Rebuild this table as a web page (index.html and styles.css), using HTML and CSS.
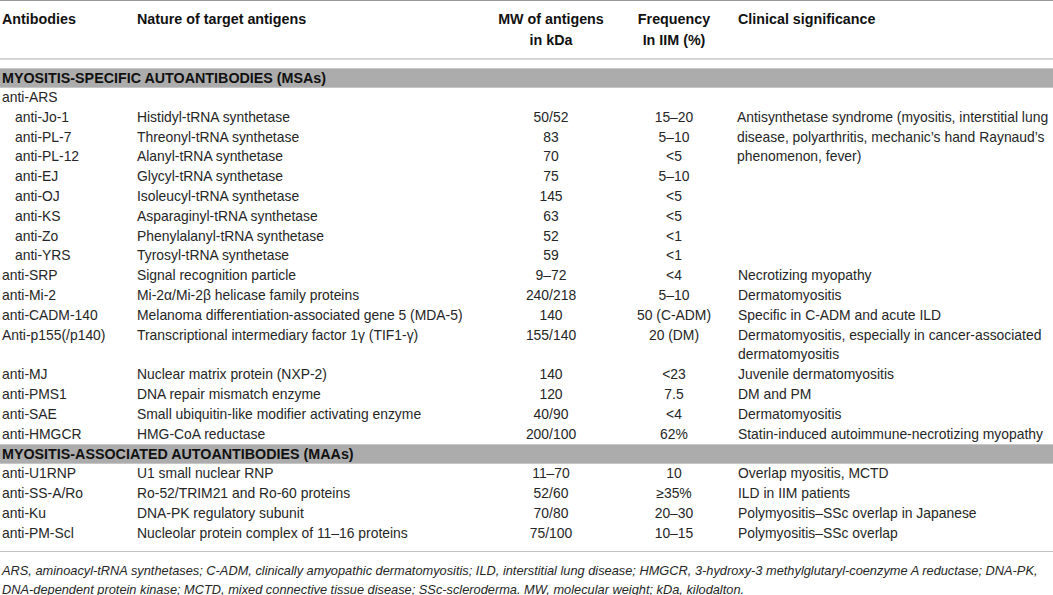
FILE: index.html
```html
<!DOCTYPE html>
<html>

<head>
    <meta charset="UTF-8">
    <title>Myositis autoantibodies</title>
    <link rel="stylesheet" href="styles.css">
</head>

<body>
    <table class="abtable">
        <colgroup>
            <col class="c-ab">
            <col class="c-nature">
            <col class="c-mw">
            <col class="c-freq">
            <col class="c-clin">
        </colgroup>
        <thead>
            <tr>
                <th>Antibodies</th>
                <th>Nature of target antigens</th>
                <th class="mid">MW of antigens<br>in kDa</th>
                <th class="mid">Frequency<br>In IIM (%)</th>
                <th>Clinical significance</th>
            </tr>
        </thead>
        <tbody>
            <tr class="group first">
                <td colspan="5">MYOSITIS-SPECIFIC AUTOANTIBODIES (MSAs)</td>
            </tr>
            <tr>
                <td>anti-ARS</td>
                <td></td>
                <td></td>
                <td></td>
                <td></td>
            </tr>
            <tr>
                <td class="sub">anti-Jo-1</td>
                <td>Histidyl-tRNA synthetase</td>
                <td class="mid">50/52</td>
                <td class="mid">15–20</td>
                <td class="clin" rowspan="8">Antisynthetase syndrome (myositis, interstitial lung<br>disease, polyarthritis, mechanic’s hand Raynaud’s<br>phenomenon, fever)</td>
            </tr>
            <tr>
                <td class="sub">anti-PL-7</td>
                <td>Threonyl-tRNA synthetase</td>
                <td class="mid">83</td>
                <td class="mid">5–10</td>
            </tr>
            <tr>
                <td class="sub">anti-PL-12</td>
                <td>Alanyl-tRNA synthetase</td>
                <td class="mid">70</td>
                <td class="mid">&lt;5</td>
            </tr>
            <tr>
                <td class="sub">anti-EJ</td>
                <td>Glycyl-tRNA synthetase</td>
                <td class="mid">75</td>
                <td class="mid">5–10</td>
            </tr>
            <tr>
                <td class="sub">anti-OJ</td>
                <td>Isoleucyl-tRNA synthetase</td>
                <td class="mid">145</td>
                <td class="mid">&lt;5</td>
            </tr>
            <tr>
                <td class="sub">anti-KS</td>
                <td>Asparaginyl-tRNA synthetase</td>
                <td class="mid">63</td>
                <td class="mid">&lt;5</td>
            </tr>
            <tr>
                <td class="sub">anti-Zo</td>
                <td>Phenylalanyl-tRNA synthetase</td>
                <td class="mid">52</td>
                <td class="mid">&lt;1</td>
            </tr>
            <tr>
                <td class="sub">anti-YRS</td>
                <td>Tyrosyl-tRNA synthetase</td>
                <td class="mid">59</td>
                <td class="mid">&lt;1</td>
            </tr>
            <tr>
                <td>anti-SRP</td>
                <td>Signal recognition particle</td>
                <td class="mid">9–72</td>
                <td class="mid">&lt;4</td>
                <td>Necrotizing myopathy</td>
            </tr>
            <tr>
                <td>anti-Mi-2</td>
                <td>Mi-2α/Mi-2β helicase family proteins</td>
                <td class="mid">240/218</td>
                <td class="mid">5–10</td>
                <td>Dermatomyositis</td>
            </tr>
            <tr>
                <td>anti-CADM-140</td>
                <td>Melanoma differentiation-associated gene 5 (MDA-5)</td>
                <td class="mid">140</td>
                <td class="mid">50 (C-ADM)</td>
                <td>Specific in C-ADM and acute ILD</td>
            </tr>
            <tr>
                <td>Anti-p155(/p140)</td>
                <td>Transcriptional intermediary factor 1γ (TIF1-γ)</td>
                <td class="mid">155/140</td>
                <td class="mid">20 (DM)</td>
                <td>Dermatomyositis, especially in cancer-associated<br>dermatomyositis</td>
            </tr>
            <tr>
                <td>anti-MJ</td>
                <td>Nuclear matrix protein (NXP-2)</td>
                <td class="mid">140</td>
                <td class="mid">&lt;23</td>
                <td>Juvenile dermatomyositis</td>
            </tr>
            <tr>
                <td>anti-PMS1</td>
                <td>DNA repair mismatch enzyme</td>
                <td class="mid">120</td>
                <td class="mid">7.5</td>
                <td>DM and PM</td>
            </tr>
            <tr>
                <td>anti-SAE</td>
                <td>Small ubiquitin-like modifier activating enzyme</td>
                <td class="mid">40/90</td>
                <td class="mid">&lt;4</td>
                <td>Dermatomyositis</td>
            </tr>
            <tr>
                <td>anti-HMGCR</td>
                <td>HMG-CoA reductase</td>
                <td class="mid">200/100</td>
                <td class="mid">62%</td>
                <td>Statin-induced autoimmune-necrotizing myopathy</td>
            </tr>
            <tr class="group">
                <td colspan="5">MYOSITIS-ASSOCIATED AUTOANTIBODIES (MAAs)</td>
            </tr>
            <tr>
                <td>anti-U1RNP</td>
                <td>U1 small nuclear RNP</td>
                <td class="mid">11–70</td>
                <td class="mid">10</td>
                <td>Overlap myositis, MCTD</td>
            </tr>
            <tr>
                <td>anti-SS-A/Ro</td>
                <td>Ro-52/TRIM21 and Ro-60 proteins</td>
                <td class="mid">52/60</td>
                <td class="mid">≥35%</td>
                <td>ILD in IIM patients</td>
            </tr>
            <tr>
                <td>anti-Ku</td>
                <td>DNA-PK regulatory subunit</td>
                <td class="mid">70/80</td>
                <td class="mid">20–30</td>
                <td>Polymyositis–SSc overlap in Japanese</td>
            </tr>
            <tr class="last">
                <td>anti-PM-Scl</td>
                <td>Nucleolar protein complex of 11–16 proteins</td>
                <td class="mid">75/100</td>
                <td class="mid">10–15</td>
                <td>Polymyositis–SSc overlap</td>
            </tr>
        </tbody>
    </table>

    <p class="note">ARS, aminoacyl-tRNA synthetases; C-ADM, clinically amyopathic dermatomyositis; ILD, interstitial lung disease; HMGCR, 3-hydroxy-3 methylglutaryl-coenzyme A reductase; DNA-PK,<br>DNA-dependent protein kinase; MCTD, mixed connective tissue disease; SSc-scleroderma. MW, molecular weight; kDa, kilodalton.</p>
</body>

</html>
```

FILE: styles.css
```css
body {
    margin: 0;
    padding: 0;
    background-color: #fff;
    color: #262626;
    font-family: "Liberation Sans", Arial, sans-serif;
    font-size: 13.9px;
}

.abtable {
    width: 1053px;
    table-layout: fixed;
    border-collapse: separate;
    border-spacing: 0;
    border-top: 1px solid #999;
}

.c-ab {
    width: 135px;
}

.c-nature {
    width: 355px;
}

.c-mw {
    width: 122px;
}

.c-freq {
    width: 124px;
}

.abtable th,
.abtable td {
    padding: 0 0 0 2px;
    text-align: left;
    vertical-align: top;
    line-height: 19.8px;
    white-space: nowrap;
}

.abtable th {
    color: #111;
    font-size: 14.3px;
    font-weight: bold;
    line-height: 20.5px;
    padding-top: 8px;
    padding-bottom: 8px;
    border-bottom: 2px solid #d6d6d6;
}

.abtable .mid {
    text-align: center;
    padding-left: 0;
}

.abtable td.sub {
    padding-left: 15px;
}

.abtable td.clin {
    padding-left: 1px;
}

/* grey section band */
.group td {
    background-color: #acacac;
    color: #111;
    font-size: 14.3px;
    font-weight: bold;
    line-height: 20px;
    box-shadow: inset 0 1px #c6c6c6, inset 0 -1px #c6c6c6;
}

.group.first td {
    border-top: 8px solid #fff;
    background-clip: padding-box;
}

.last td {
    padding-bottom: 7px;
    border-bottom: 1px solid #c2c2c2;
}

.note {
    margin: 9px 0 0 0;
    padding: 0 0 0 2px;
    font-size: 12.8px;
    font-style: italic;
    line-height: 19px;
    white-space: nowrap;
}
```
